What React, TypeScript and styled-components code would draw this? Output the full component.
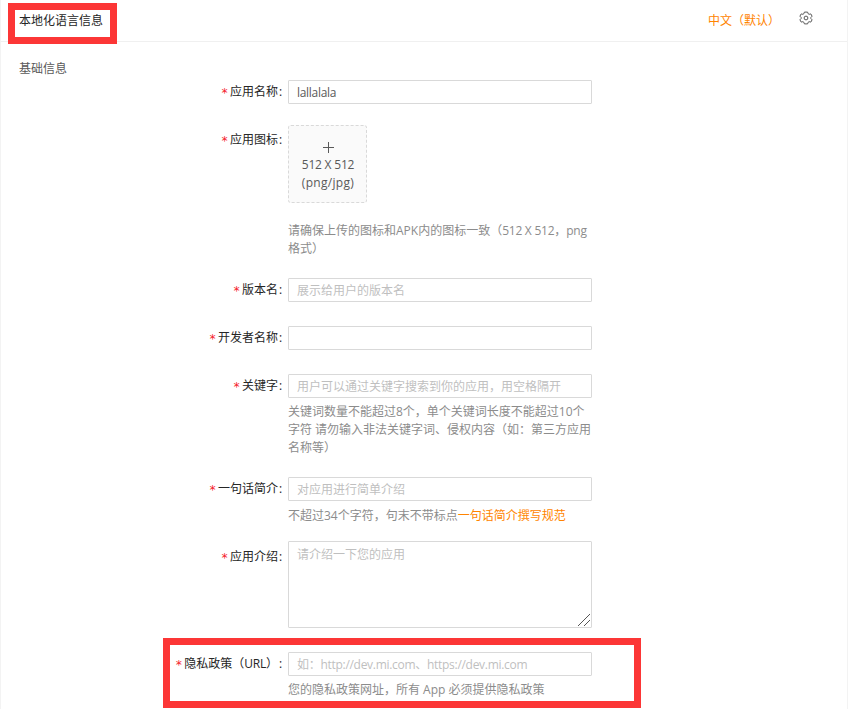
import React from "react";
import styled, { createGlobalStyle } from "styled-components";

const GlobalStyle = createGlobalStyle`
  *, *::before, *::after { box-sizing: border-box; }
  body {
    margin: 0;
    background: #fff;
    overflow: hidden;
    font-family: "Open Sans", "Noto Sans CJK SC", sans-serif;
    font-size: 12px;
    line-height: 18px;
    color: #595959;
  }
`;

const Page = styled.main`
  position: relative;
  width: 848px;
  height: 709px;
  overflow: hidden;
  border-left: 1px solid #f3f3f3;
  border-right: 1px solid #f3f3f3;
`;

const Header = styled.header`
  display: flex;
  align-items: flex-start;
  justify-content: space-between;
  height: 42px;
  padding: 11px 34px 0 18px;
  border-bottom: 1px solid #f0f0f0;
`;

const Title = styled.h1`
  margin: 1px 0 0;
  font-size: 12px;
  font-weight: 400;
  line-height: 18px;
  color: #262626;
`;

const HeaderTools = styled.div`
  display: flex;
  gap: 19px;
`;

const Language = styled.span`
  padding-top: 1px;
  color: #ff8400;
  white-space: nowrap;
`;

const IconButton = styled.button`
  display: block;
  width: 14px;
  height: 14px;
  padding: 0;
  border: 0;
  background: none;
  color: #595959;
`;

const Section = styled.h2`
  margin: 18px 0 2px 18px;
  font-size: 12px;
  font-weight: 400;
  line-height: 18px;
  color: #595959;
`;

const Row = styled.div<{ $height: number }>`
  display: grid;
  grid-template-columns: 287px 304px;
  height: ${(p) => p.$height}px;
`;

const Label = styled.label<{ $top?: number }>`
  display: flex;
  justify-content: flex-end;
  padding: ${(p) => p.$top ?? 3}px 5px 0 0;
  color: #262626;
  white-space: nowrap;

  &::before {
    content: "*";
    width: 9px;
    padding-top: 1px;
    font-family: "DejaVu Sans Mono", monospace;
    font-size: 12px;
    color: #f5222d;
  }
  &::after {
    content: ":";
    width: 5px;
    padding-left: 1px;
  }
`;

const Tight = styled.span`
  letter-spacing: -0.25px;
`;

const Input = styled.input`
  display: block;
  width: 304px;
  height: 24px;
  padding: 1px 8px 0;
  border: 1px solid #d9d9d9;
  border-radius: 1px;
  outline: none;
  background: #fff;
  font: inherit;
  color: #595959;
  &::placeholder { color: #bfbfbf; opacity: 1; }
`;

const LatinInput = styled(Input)`
  letter-spacing: -0.29px;
`;

const AreaWrap = styled.div`
  position: relative;
  width: 304px;
  height: 87px;
`;

const TextArea = styled.textarea`
  display: block;
  width: 100%;
  height: 100%;
  padding: 4px 8px;
  border: 1px solid #d9d9d9;
  border-radius: 1px;
  outline: none;
  resize: none;
  font: inherit;
  line-height: 18px;
  color: #595959;
  &::placeholder { color: #bfbfbf; opacity: 1; }
`;

const Grip = styled.svg`
  position: absolute;
  right: 2px;
  bottom: 2px;
`;

const Upload = styled.div`
  display: flex;
  flex-direction: column;
  align-items: center;
  width: 79px;
  height: 78px;
  padding: 16px 0 0 1px;
  border: 1px dashed #d9d9d9;
  border-radius: 3px;
  background: #fafafa;
  text-align: center;
  white-space: nowrap;

  svg { margin-bottom: 3px; }
`;

const Size = styled.span`
  letter-spacing: -0.2px;
`;

const Formats = styled.span`
  letter-spacing: 0.3px;
`;

const Help = styled.p<{ $top?: number }>`
  margin: ${(p) => p.$top ?? 5}px 0 0;
  color: #8c8c8c;
  white-space: nowrap;
`;

const Link = styled.a`
  color: #ff8400;
  text-decoration: none;
`;

const Highlight = styled.div<{ $x: number; $y: number; $w: number; $h: number }>`
  position: absolute;
  left: ${(p) => p.$x}px;
  top: ${(p) => p.$y}px;
  width: ${(p) => p.$w}px;
  height: ${(p) => p.$h}px;
  border: 7px solid #fc3636;
  pointer-events: none;
`;

const GearIcon = () => (
  <svg width="14" height="14" viewBox="0 0 14 14" fill="none" stroke="currentColor" strokeLinejoin="round">
    <path d="M5.4 1.100h3.200l.5 1.600 1 .6 1.700-.4 1.300 2.300-1.200 1.200v1.200l1.200 1.200-1.300 2.300-1.700-.4-1 .6-.5 1.600H5.400l-.5-1.600-1-.6-1.700.4L.9 8.800l1.200-1.200V6.400L.9 5.200l1.300-2.300 1.700.4 1-.6z" />
    <circle cx="7" cy="7" r="1.900" />
  </svg>
);

export default function App() {
  return (
    <Page lang="zh-CN">
      <GlobalStyle />
      <Header>
        <Title>本地化语言信息</Title>
        <HeaderTools>
          <Language>中文（默认）</Language>
          <IconButton aria-label="设置"><GearIcon /></IconButton>
        </HeaderTools>
      </Header>
      <Section>基础信息</Section>

      <Row $height={45}>
        <Label>应用名称</Label>
        <LatinInput defaultValue="lallalala" />
      </Row>
      <Row $height={153}>
        <Label $top={6}>应用图标</Label>
        <div>
          <Upload>
            <svg width="11" height="11" viewBox="0 0 11 11" stroke="#595959" shapeRendering="crispEdges">
              <path d="M5.5 0v11M0 5.5h11" />
            </svg>
            <Size>512 X 512</Size>
            <Formats>(png/jpg)</Formats>
          </Upload>
          <Help $top={19}>请确保上传的图标和APK内的图标一致（<Tight>512 X 512</Tight>，<Tight>png</Tight><br />格式）</Help>
        </div>
      </Row>
      <Row $height={48}>
        <Label>版本名</Label>
        <Input placeholder="展示给用户的版本名" />
      </Row>
      <Row $height={48}>
        <Label>开发者名称</Label>
        <Input />
      </Row>
      <Row $height={103}>
        <Label>关键字</Label>
        <div>
          <Input placeholder="用户可以通过关键字搜索到你的应用，用空格隔开" />
          <Help>关键词数量不能超过8个，单个关键词长度不能超过10个<br />字符 请勿输入非法关键字词、侵权内容（如：第三方应用<br />名称等）</Help>
        </div>
      </Row>
      <Row $height={64}>
        <Label>一句话简介</Label>
        <div>
          <Input placeholder="对应用进行简单介绍" />
          <Help $top={6}>不超过34个字符，句末不带标点<Link>一句话简介撰写规范</Link></Help>
        </div>
      </Row>
      <Row $height={111}>
        <Label $top={7}>应用介绍</Label>
        <AreaWrap>
          <TextArea placeholder="请介绍一下您的应用" />
          <Grip width="12" height="12" viewBox="0 0 12 12" stroke="#555" fill="none">
            <path d="M0 12L12 0M6 12l6-6" />
          </Grip>
        </AreaWrap>
      </Row>
      <Row $height={57}>
        <Label><span>隐私政策（<Tight>URL</Tight>）</span></Label>
        <div>
          <LatinInput placeholder="如：http://dev.mi.com、https://dev.mi.com" />
          <Help>您的隐私政策网址，所有 App 必须提供隐私政策</Help>
        </div>
      </Row>

      <Highlight $x={7} $y={3} $w={109} $h={41} />
      <Highlight $x={162} $y={638} $w={478} $h={70} />
    </Page>
  );
}
